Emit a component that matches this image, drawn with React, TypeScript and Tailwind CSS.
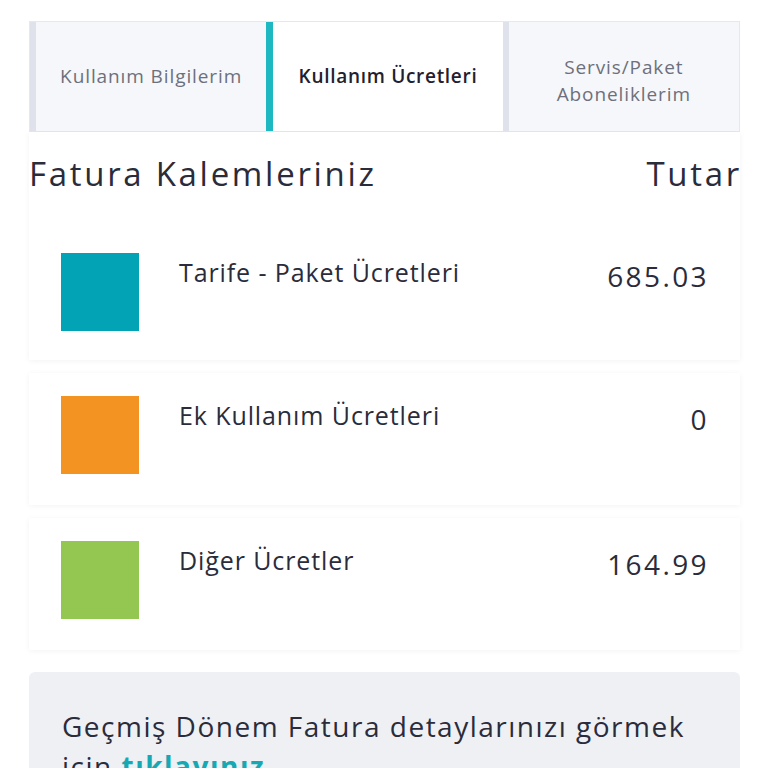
import React from 'react';

interface InvoiceItem {
  label: string;
  amount: string;
  color: string;
}

const items: InvoiceItem[] = [
  { label: 'Tarife - Paket Ücretleri', amount: '685.03', color: 'bg-[#01a3b5]' },
  { label: 'Ek Kullanım Ücretleri', amount: '0', color: 'bg-[#f39422]' },
  { label: 'Diğer Ücretler', amount: '164.99', color: 'bg-[#93c752]' },
];

const ItemRow: React.FC<{ item: InvoiceItem }> = ({ item }) => (
  <div className="flex items-start pl-[32px] pr-[31px]">
    <div className={`w-[78px] h-[78px] shrink-0 ${item.color}`} />
    <div className="ml-[40px] flex-1 mt-[3px] text-[25px] leading-[32px] tracking-[0.9px] text-[#2a2c3b]">
      {item.label}
    </div>
    <div className="mt-[5px] text-[28px] leading-[36px] tracking-[2.4px] text-[#2a2c3b]">
      {item.amount}
    </div>
  </div>
);

const App: React.FC = () => {
  return (
    <div className="min-h-screen bg-white font-['Open_Sans',sans-serif] text-[#2a2c3b] pt-[21px] px-[29px]">
      {/* tabs */}
      <div className="flex h-[111px] border border-[#e6e8ee] w-[711px]">
        <div className="flex flex-1 bg-[#f6f7fa]">
          <div className="w-[6px] bg-[#dfe2ea]" />
          <div className="flex-1 flex items-center justify-center text-[19px] tracking-[0.9px] text-[#6d707c]">
            Kullanım Bilgilerim
          </div>
        </div>
        <div className="flex flex-1 bg-white">
          <div className="w-[7px] bg-[#1db8c1]" />
          <div className="flex-1 flex items-center justify-center text-[19px] font-semibold tracking-[0.7px] text-[#1f2130]">
            Kullanım Ücretleri
          </div>
        </div>
        <div className="flex flex-1 bg-[#f6f7fa]">
          <div className="w-[6px] bg-[#dfe2ea]" />
          <div className="flex-1 flex items-center justify-center pt-[8px] text-center text-[19px] leading-[27px] tracking-[0.9px] text-[#6d707c]">
            Servis/Paket
            <br />
            Aboneliklerim
          </div>
        </div>
      </div>

      {/* invoice cards */}
      <div className="w-[711px] bg-white shadow-[0_1px_6px_rgba(0,0,0,0.05)] pt-[22px] pb-[29px]">
        <div className="flex justify-between text-[33px] leading-[40px] tracking-[2.7px] text-[#2a2c3b]">
          <span>Fatura Kalemleriniz</span>
          <span className="-mr-[2px]">Tutar</span>
        </div>
        <div className="mt-[59px]">
          <ItemRow item={items[0]} />
        </div>
      </div>

      {items.slice(1).map((item) => (
        <div
          key={item.label}
          className="w-[711px] mt-[13px] bg-white shadow-[0_1px_6px_rgba(0,0,0,0.05)] pt-[23px] pb-[31px]"
        >
          <ItemRow item={item} />
        </div>
      ))}

      <div className="w-[711px] mt-[22px] rounded-md bg-[#eff0f4] pt-[34px] pb-[30px] px-[33px] text-[28px] leading-[40px] tracking-[1.5px] text-[#2a2c3b]">
        Geçmiş Dönem Fatura detaylarınızı görmek için{' '}
        <a className="font-bold text-[#17a9b3]">tıklayınız</a>
      </div>
    </div>
  );
};

export default App;
